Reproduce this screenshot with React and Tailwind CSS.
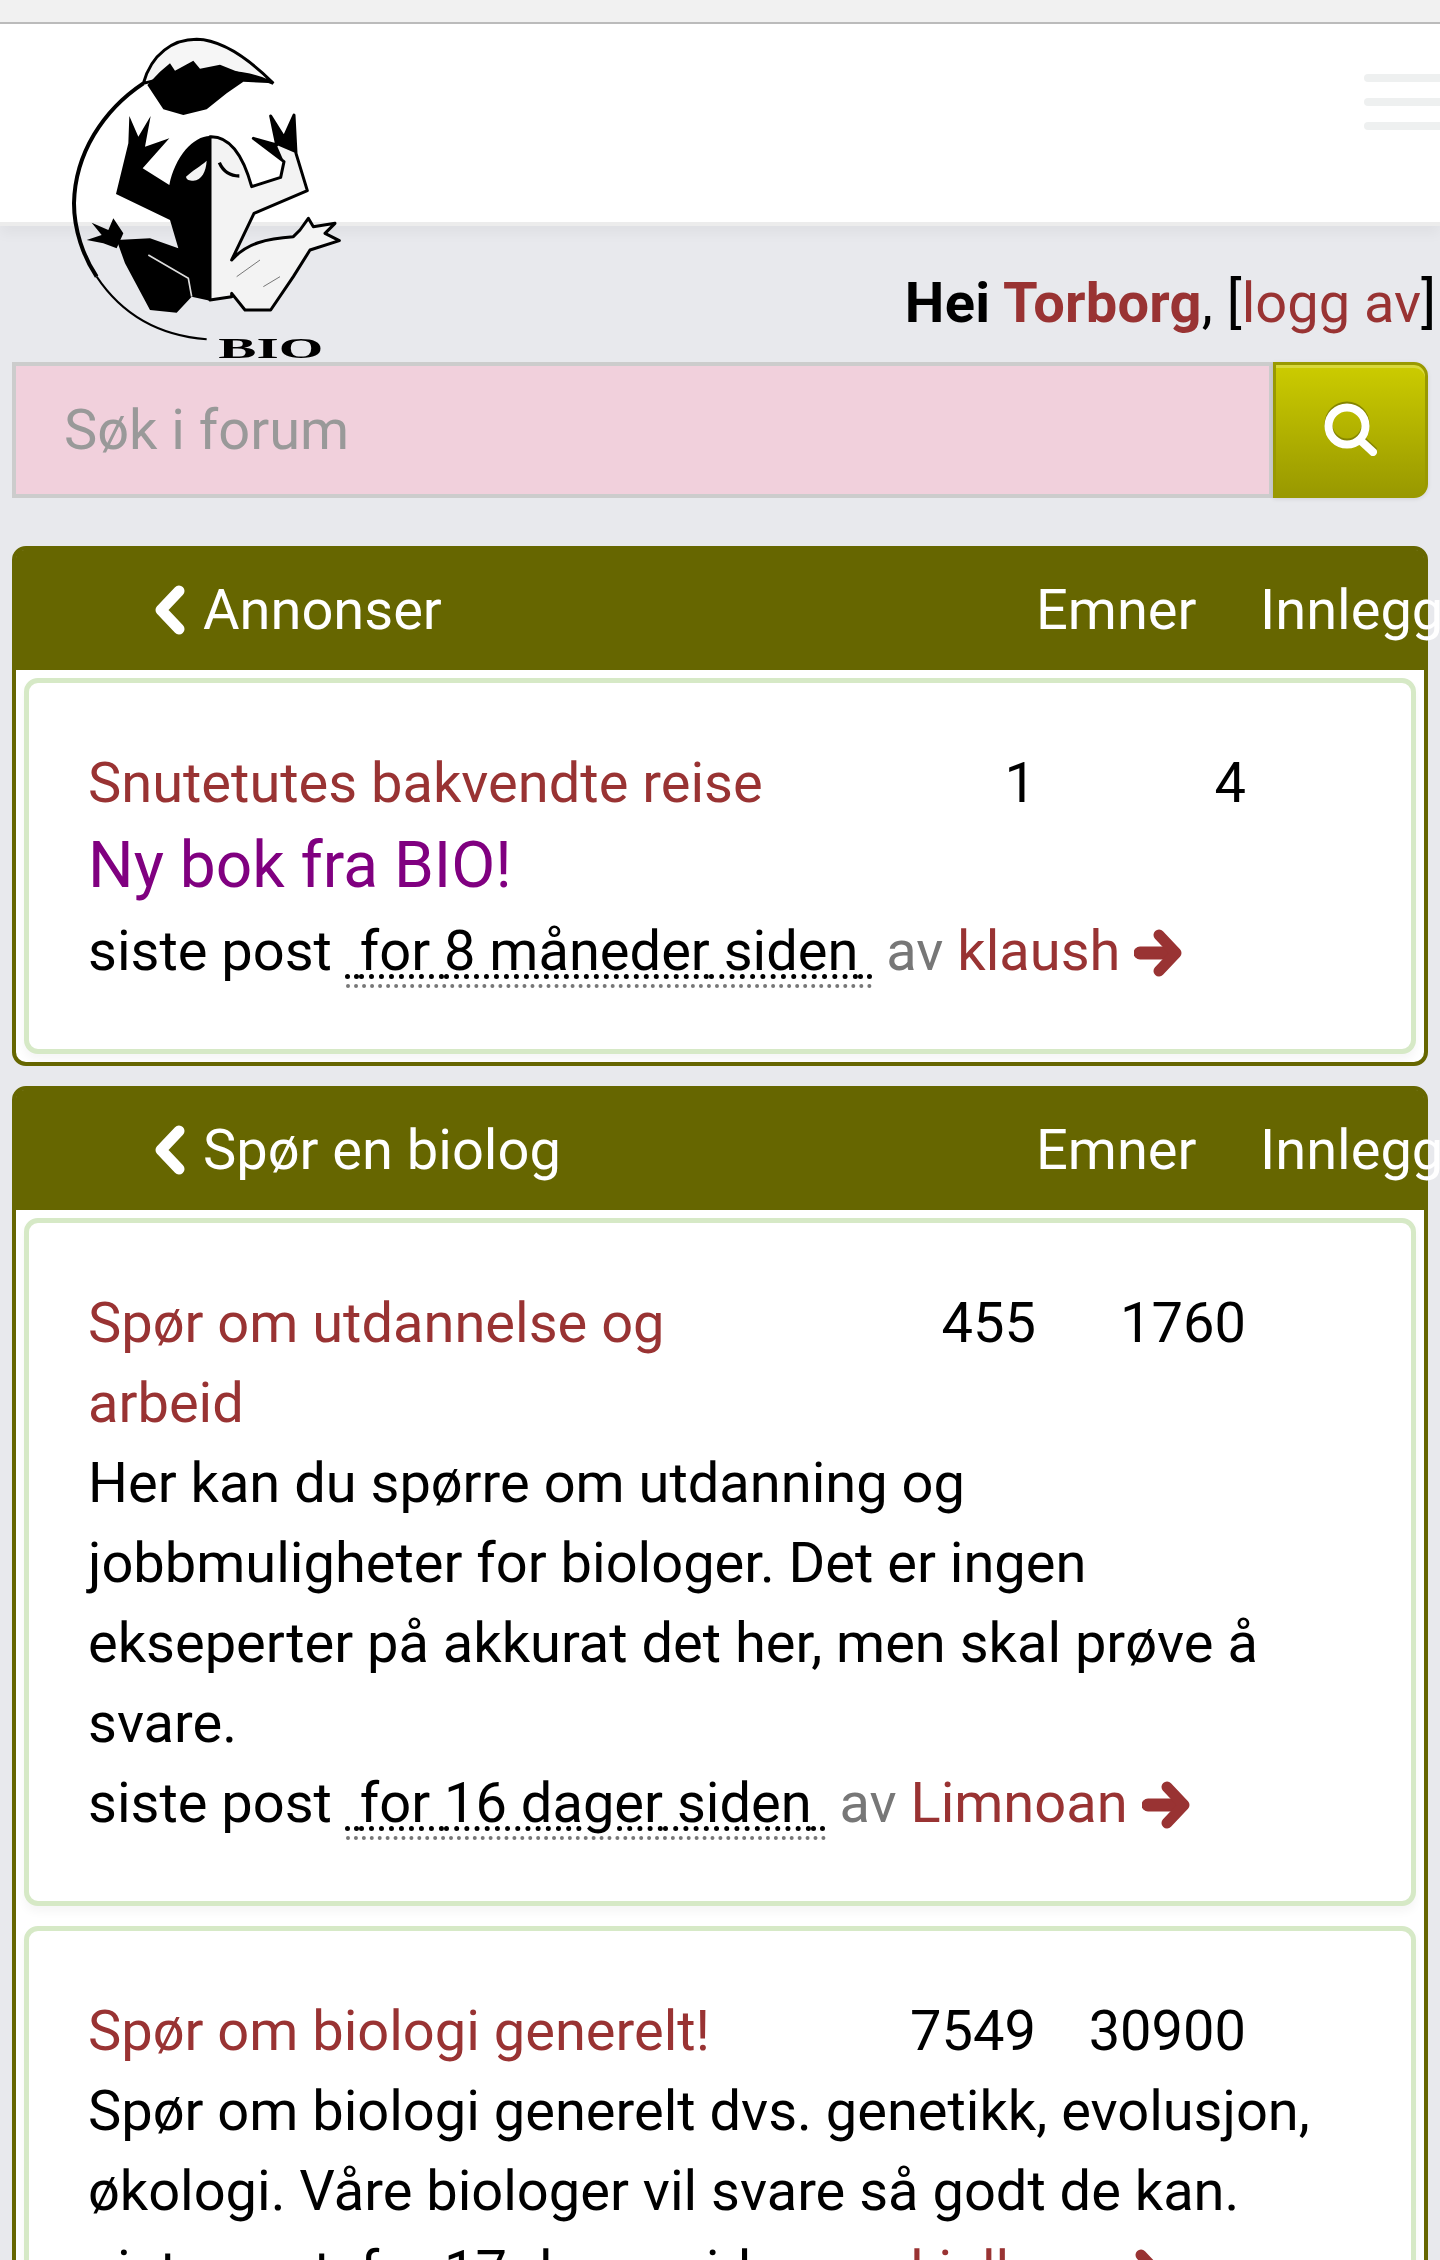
const font = { fontFamily: "Roboto, sans-serif" };

function Logo() {
  return (
    <svg
      viewBox="0 0 870 1005"
      className="absolute left-[60px] top-[30px] w-[290px] h-[335px] blur-[0.6px]"
    >
      {/* tail */}
      <path d="M250 160C275 70 340 28 410 28C490 30 570 90 640 160C560 120 450 110 250 160Z" fill="#f6f6f6" stroke="#000" strokeWidth="9" />
      <path d="M262 165L300 125L330 100L345 122L400 92L420 116L480 104L525 122L640 160L550 155L500 190L440 238L370 255L310 238Z" fill="#000" />
      <path d="M250 160C130 240 45 370 42 520C42 600 70 680 110 740" fill="none" stroke="#000" strokeWidth="12" />
      <path d="M110 740C170 830 270 915 440 928" fill="none" stroke="#000" strokeWidth="6" />
      {/* light half */}
      <path
        d="M450 320C500 318 545 360 575 470L662 442L672 395L580 325L650 345L632 258L672 322L702 255L708 370L742 482L582 550L515 690C560 640 620 625 700 620L720 600L745 565L760 590L825 580L795 610L838 632L750 660L700 740L632 840H555L515 790L515 800L450 810Z"
        fill="#f3f3f3"
        stroke="#000"
        strokeWidth="9"
        strokeLinejoin="round"
      />
      <path d="M632 258L672 322L702 255L708 370L650 345ZM580 325L650 345L672 395Z" fill="#000" />
      <path d="M478 398C490 425 510 438 538 438" fill="none" stroke="#000" strokeWidth="10" />
      <path d="M610 770L660 740M530 740L600 690" fill="none" stroke="#777" strokeWidth="3" />
      {/* dark half */}
      <path
        d="M450 318C400 318 345 380 328 465L248 415L328 325L255 350L272 258L235 320L208 258L205 340L168 492L330 570L355 655L270 625L170 630L195 700L270 840L350 848L395 800L450 812Z"
        fill="#000"
      />
      <path d="M378 440C400 420 420 410 440 392C438 425 425 450 400 452C388 452 380 450 378 440Z" fill="#f3f3f3" />
      <path d="M265 675L385 745L395 800" fill="none" stroke="#ddd" strokeWidth="5" />
      <path d="M190 610L160 565L145 600L95 578L125 615L80 630L130 640L170 655Z" fill="#000" />
      <text
        x="475"
        y="985"
        textLength="315"
        lengthAdjust="spacingAndGlyphs"
        fontFamily="Liberation Serif, serif"
        fontWeight="700"
        fontSize="91"
        fill="#000"
      >
        BIO
      </text>
    </svg>
  );
}

function Hamburger() {
  return (
    <div className="flex flex-col gap-[16px] w-[110px] mr-[-34px]">
      <span className="h-[8px] rounded-full bg-[#eef0f0]" />
      <span className="h-[8px] rounded-full bg-[#eef0f0]" />
      <span className="h-[8px] rounded-full bg-[#eef0f0]" />
    </div>
  );
}

function SearchBar() {
  return (
    <div className="flex h-[136px] mt-[10px] mx-[12px]">
      <input
        readOnly
        placeholder="Søk i forum"
        className="flex-1 min-w-0 bg-[#f1d0dc] border-4 border-[#cccccc] pl-[48px] text-[56px] text-black placeholder:text-[#999999] outline-none"
      />
      <button className="w-[155px] flex items-center justify-center rounded-r-[14px] border-[3px] border-[#999900] bg-gradient-to-b from-[#cccc00] to-[#999900] shadow-[inset_0_3px_0_#d8d83a,0_1px_4px_rgba(0,0,0,0.1)]">
        <svg viewBox="0 0 54 54" className="w-[54px] h-[54px] drop-shadow-[0_-2px_0_#858500]">
          <circle cx="23" cy="23" r="18.5" fill="none" stroke="#fff" strokeWidth="8" />
          <path d="M36 37L49 49" stroke="#fff" strokeWidth="8" strokeLinecap="round" />
        </svg>
      </button>
    </div>
  );
}

function ArrowRight() {
  return (
    <svg viewBox="0 0 48 48" className="inline w-[48px] h-[48px] align-[-7px] text-[#993333]">
      <path d="M6 24H38" fill="none" stroke="currentColor" strokeWidth="13" strokeLinecap="round" />
      <path d="M25 6L42 24L25 42" fill="none" stroke="currentColor" strokeWidth="11" strokeLinecap="round" strokeLinejoin="round" />
    </svg>
  );
}

function ChevronLeft() {
  return (
    <svg viewBox="0 0 36 50" className="w-[36px] h-[50px] mr-[15px] shrink-0">
      <path d="M27 6L9 25L27 44" fill="none" stroke="#fff" strokeWidth="11" strokeLinecap="round" strokeLinejoin="round" />
    </svg>
  );
}

function PostLine({ when, by }) {
  return (
    <div className="leading-[80px] text-black">
      siste post{" "}
      <span className="underline decoration-dotted decoration-[5px] underline-offset-[4px] border-b-4 border-dotted border-[#777777]">
        {"\u00a0"}for {when} siden{"\u00a0"}
      </span>{" "}
      <span className="text-[#777777]">av</span>{" "}
      <span className="text-[#993333]">{by}</span>{" "}
      <ArrowRight />
    </div>
  );
}

function ForumCard({ title, topics, posts, subtitle, description, when, by }) {
  return (
    <div className="rounded-[14px] border-[5px] border-[#d6e9c6] bg-white pt-[60px] pb-[58px] pl-[59px] pr-[61px] shadow-[0_6px_10px_rgba(0,0,0,0.04)]">
      <div className="flex">
        <div className="w-[703px] leading-[80px] text-[#993333]">{title}</div>
        <div className="w-[245px] leading-[80px] text-right text-black">{topics}</div>
        <div className="w-[210px] leading-[80px] text-right text-black">{posts}</div>
      </div>
      {subtitle && <div className="text-[64px] leading-[86px] mb-[2px] text-[#800080]">{subtitle}</div>}
      {description && <div className="leading-[80px] text-black">{description}</div>}
      <PostLine when={when} by={by} />
    </div>
  );
}

function Panel({ name, children }) {
  return (
    <section className="mx-[12px] rounded-[14px] border-4 border-[#666600] bg-white">
      <div className="flex items-center h-[120px] pl-[136px] bg-[#666600] text-white rounded-t-[8px] leading-[80px] whitespace-nowrap">
        <ChevronLeft />
        <span className="w-[833px] shrink-0">{name}</span>
        <span className="w-[224px] shrink-0">Emner</span>
        <span className="shrink-0">Innlegg</span>
      </div>
      <div className="flex flex-col gap-[20px] pt-[8px] pb-[8px] px-[8px]">{children}</div>
    </section>
  );
}

export default function App() {
  return (
    <div style={font} className="relative w-[1440px] h-[2260px] overflow-hidden bg-[#e8e9ed] text-[56px]">
      <div className="h-[22px] bg-[#f1f1f1] border-b-2 border-[#bbbbbb] box-content" />
      <header className="flex items-center justify-end h-[202px] pb-[42px] bg-white border-b-4 border-[#ececec] shadow-[0_8px_12px_rgba(0,0,0,0.04)]">
        <Hamburger />
      </header>
      <Logo />
      <div className="h-[126px] pr-[4px] pt-[37px] text-right leading-[80px] text-black">
        <b className="font-bold tracking-[0.25px]">Hei <span className="text-[#993333]">Torborg</span></b>, [<span className="text-[#993333]">logg av</span>]
      </div>
      <SearchBar />
      <div className="mt-[48px] flex flex-col gap-[20px]">
        <Panel name="Annonser">
          <ForumCard
            title="Snutetutes bakvendte reise"
            topics="1"
            posts="4"
            subtitle="Ny bok fra BIO!"
            when="8 måneder"
            by="klaush"
          />
        </Panel>
        <Panel name="Spør en biolog">
          <ForumCard
            title="Spør om utdannelse og arbeid"
            topics="455"
            posts="1760"
            description="Her kan du spørre om utdanning og jobbmuligheter for biologer. Det er ingen ekseperter på akkurat det her, men skal prøve å svare."
            when="16 dager"
            by="Limnoan"
          />
          <ForumCard
            title="Spør om biologi generelt!"
            topics="7549"
            posts="30900"
            description="Spør om biologi generelt dvs. genetikk, evolusjon, økologi. Våre biologer vil svare så godt de kan."
            when="17 dager"
            by="kjellaug"
          />
        </Panel>
      </div>
    </div>
  );
}
